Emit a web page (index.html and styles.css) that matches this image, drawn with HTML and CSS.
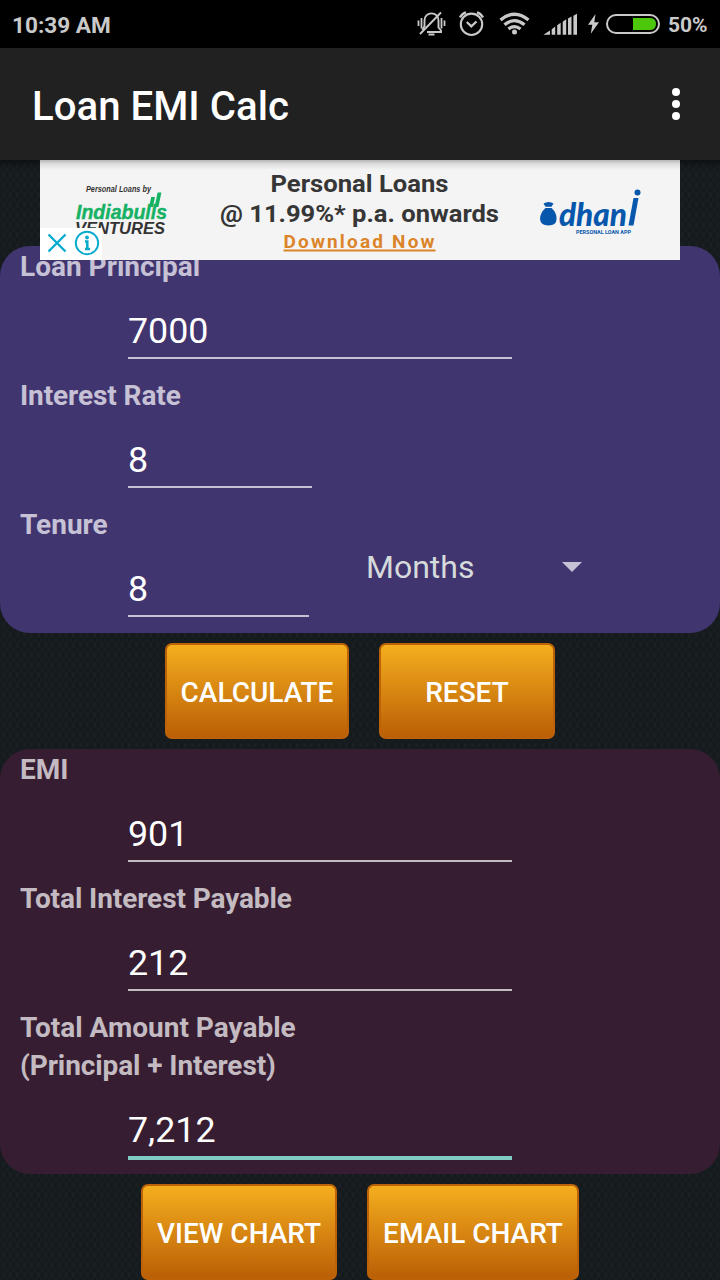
FILE: index.html
```html
<!DOCTYPE html>
<html lang="en">
<head>
<meta charset="utf-8">
<title>Loan EMI Calc</title>
<link rel="stylesheet" href="styles.css">
</head>
<body>
<div class="screen">
  <header class="status">
    <span class="clock">10:39 AM</span>
    <svg class="status-icons" width="248" height="48" viewBox="412 0 248 48" fill="none" stroke="#c9c9c9" stroke-width="1.9">
      <g>
        <path d="M424.500 27V20.500C424.500 11 438.500 11 438.500 20.500V27.500L441 30.500V32H427M424.500 26L422.500 30"/>
        <path d="M441 12.500L420 34"/>
        <path d="M428.500 34.500H434.500" stroke-width="2"/>
        <path d="M418.500 20.500V26M421.500 18V28.500M441.500 18V28.500M444.500 20.500V26" stroke-width="1.8"/>
      </g>
      <g>
        <circle cx="471.500" cy="24.300" r="10.700" stroke-width="2.100"/>
        <path d="M466.800 22L471.300 26.300L476.500 21.500" stroke-width="2.300"/>
        <path d="M460 17.500Q462 13.500 466 12.300M477 12.300Q481 13.500 483 17.500" stroke-width="2.300"/>
      </g>
      <g stroke-width="3.300">
        <path d="M500.500 20Q514.500 8.500 528.500 20"/>
        <path d="M504.500 24.700Q514.500 16.500 524.500 24.700"/>
        <path d="M508.500 29Q514.500 24.200 520.500 29"/>
        <circle cx="514.500" cy="32" r="2.500" fill="#c9c9c9" stroke="none"/>
      </g>
      <path d="M543.700 34.700L550.300 30.400V34.700ZM552 29.300L555.500 26.500V34.700H552ZM557.500 25.300L561 22.700V34.700H557.500ZM563 21.700L566.500 19.300V34.700H563ZM568.300 18.500L571.800 16.500V34.700H568.300ZM573.700 15.700L577.300 13.700V34.700H573.700Z" transform="translate(-.3 0)" fill="#c9c9c9" stroke="none"/>
      <path d="M595.500 14L588 24.800H592.300L590.800 33.700L599 22.300H594.300Z" fill="#c9c9c9" stroke="none"/>
      <rect x="607" y="15" width="52" height="18" rx="9" stroke-width="2"/>
      <path d="M633 18H650.500Q656 18.500 656 24T650.500 30H633Z" fill="#4cc70c" stroke="none"/>
    </svg>
    <span class="percent">50%</span>
  </header>

  <nav class="appbar">
    <h1 class="title">Loan EMI Calc</h1>
    <svg class="more" width="8" height="32" viewBox="0 0 8 32" fill="#fff"><circle cx="4" cy="4" r="4"/><circle cx="4" cy="16" r="4"/><circle cx="4" cy="28" r="4"/></svg>
  </nav>

  <main class="content">
    <aside class="ad">
      <svg width="640" height="100" viewBox="40 160 640 100">
        <g class="ad-logo">
          <text x="86" y="192" font-size="8.500" fill="#333" textLength="65" lengthAdjust="spacingAndGlyphs">Personal Loans by</text>
          <text x="76" y="218.500" font-size="19.500" fill="#16b264" stroke="#16b264" stroke-width=".4" textLength="91" lengthAdjust="spacingAndGlyphs">Indiabulls</text>
          <path d="M149.100 207L151.200 197H155L152.900 207ZM154.600 207L157.600 192.500H161.400L158.400 207Z" fill="#16b264"/>
          <text x="75" y="234" font-size="16" fill="#333" textLength="90" lengthAdjust="spacingAndGlyphs">VENTURES</text>
        </g>
        <g class="ad-copy">
          <text x="270.500" y="191.500" font-size="24" textLength="178" lengthAdjust="spacingAndGlyphs">Personal Loans</text>
          <text x="220" y="221.500" font-size="24.500" textLength="279" lengthAdjust="spacingAndGlyphs">@ 11.99%* p.a. onwards</text>
          <text x="283.500" y="247.500" font-size="19" fill="#dc8429" textLength="151" lengthAdjust="spacing">Download Now</text>
          <rect x="283.500" y="249.500" width="152" height="2" fill="#dc8429"/>
        </g>
        <g fill="#0757ac">
          <path d="M543.500 203.500Q546 202 548.500 202Q551.500 202 553.500 203.500L551.500 206.800H545.500ZM545.500 208H551.500Q557 213 556.500 219Q556.500 225.500 548.500 225.500T540 219Q540 213 545.500 208Z"/>
          <text class="dhani" x="559" y="225.500" font-size="32" textLength="68" lengthAdjust="spacingAndGlyphs">dhan</text>
          <path d="M633.500 198H638.500L633.500 225.500H628.500Z"/>
          <circle cx="637.500" cy="192.500" r="3"/>
          <text x="576" y="233.500" font-size="4.500" font-weight="700" textLength="55" lengthAdjust="spacingAndGlyphs">PERSONAL LOAN APP</text>
        </g>
        <rect x="40" y="228" width="62" height="32" fill="#fff"/>
        <g fill="none" stroke="#05aacd" stroke-width="2.300">
          <path d="M48.500 234.500L65.500 251.500M65.500 234.500L48.500 251.500"/>
          <circle cx="87" cy="243" r="11.200" stroke-width="1.900"/>
          <path d="M85 241.500H87.300V250M85 249H90" stroke-width="2.500"/>
          <circle cx="87" cy="237.500" r="1.900" fill="#05aacd" stroke="none"/>
        </g>
      </svg>
    </aside>

    <section class="panel loan">
      <div class="label">Loan Principal</div>
      <div class="row"><div class="field">7000</div></div>
      <div class="label tight">Interest Rate</div>
      <div class="row"><div class="field rate">8</div></div>
      <div class="label">Tenure</div>
      <div class="row">
        <div class="field tenure">8</div>
        <div class="spinner"><span>Months</span><svg width="20" height="10" viewBox="0 0 20 10"><path d="M0 0H20L10 10Z" fill="#c6c1d5"/></svg></div>
      </div>
    </section>

    <div class="actions">
      <button class="btn calculate">CALCULATE</button>
      <button class="btn reset">RESET</button>
    </div>

    <section class="panel result">
      <div class="label">EMI</div>
      <div class="row"><div class="field">901</div></div>
      <div class="label tight">Total Interest Payable</div>
      <div class="row"><div class="field">212</div></div>
      <div class="label">Total Amount Payable<br><span class="tight">(Principal + Interest)</span></div>
      <div class="row"><div class="field focused">7,212</div></div>
    </section>

    <div class="actions">
      <button class="btn view">VIEW CHART</button>
      <button class="btn email">EMAIL CHART</button>
    </div>
  </main>
</div>
</body>
</html>
```
FILE: styles.css
```css
* { box-sizing: border-box; }
body { margin: 0; font-family: Roboto, sans-serif; background: #000; }
.screen { width: 720px; height: 1280px; overflow: hidden; display: flex; flex-direction: column; }

.status { height: 48px; flex: none; display: flex; align-items: center; padding: 0 12px; background: #000; color: #c9c9c9; font-weight: 700; }
.clock { padding-top: 2px; font-size: 22.6px; white-space: nowrap; }
.status-icons { margin-left: auto; }
.percent { width: 40px; margin-left: 8px; padding-top: 2px; font-size: 21px; }

.appbar { height: 112px; flex: none; display: flex; align-items: center; justify-content: space-between; padding: 0 40px 0 32px; background: #212121; }
.title { margin: 0; padding-top: 6px; color: #fff; font-size: 40.2px; font-weight: 500; line-height: 48px; }

.content {
  position: relative;
  flex: 1;
  padding-top: 86px;
  background-color: #13181b;
  background-image:
    linear-gradient(#00000066, transparent 9px),
    radial-gradient(ellipse, #1a2023 10%, transparent 70%),
    radial-gradient(ellipse, #181e21 10%, transparent 70%);
  background-size: 100% 100%, 7px 10px, 7px 10px;
  background-position: 0 0, 0 0, 3.5px 5px;
}

.ad { position: absolute; left: 40px; top: 0; z-index: 1; width: 640px; height: 100px; background: linear-gradient(#b4b4b4, #dedede 4px, #f4f4f4 10px); }
.ad svg { display: block; }
.ad-logo { font-family: "Liberation Sans", Arial, sans-serif; font-weight: 700; font-style: italic; }
.ad-copy { font-family: Roboto, sans-serif; font-weight: 700; fill: #363636; }
.dhani { font-family: Lato, sans-serif; font-weight: 900; font-style: italic; }

.panel { border-radius: 30px; }
.loan { background: #413570; --muted: #c6c1d5; }
.result { background: #361d31; --muted: #c3bbc1; }
.label { padding: 2px 20px 0; margin-bottom: -2px; color: var(--muted); font-size: 28px; font-weight: 700; line-height: 38px; }
.tight { letter-spacing: -0.09px; }
.row { display: flex; height: 91px; padding: 0 128px 16px; }
.field { flex: none; width: 384px; height: 75px; padding-top: 26px; border-bottom: 2px solid var(--muted); color: #fff; font-size: 35.8px; line-height: 42px; }
.rate { width: 184px; }
.tenure { width: 181px; }
.focused { height: 77px; border-bottom: 4px solid #80cbc4; }
.spinner { display: flex; flex: none; align-items: center; justify-content: space-between; width: 216px; height: 50px; margin-left: 57px; color: #d5dadb; font-size: 32px; }

.actions { display: flex; justify-content: center; gap: 30px; padding: 10px 0; }
.btn { height: 96px; padding: 2px 0 0; border: 2px solid #bd6206; border-radius: 7px; background: linear-gradient(#f5ae1e, #ba5f06); color: #fff; font: 500 28px Roboto, sans-serif; white-space: nowrap; }
.calculate { width: 184px; }
.reset { width: 176px; }
.view { width: 196px; }
.email { width: 212px; }
```
